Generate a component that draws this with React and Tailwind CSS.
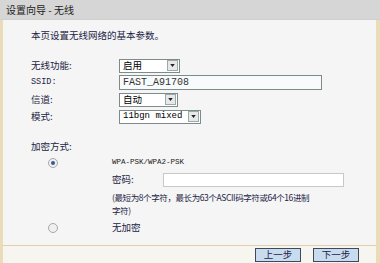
// 设置向导 — 无线 页面
const CN = { fontFamily: '"Noto Sans CJK SC", "Liberation Sans", sans-serif' };
const MONO = { fontFamily: '"Liberation Mono", "DejaVu Sans Mono", monospace' };

function Select({ value, width, mono }) {
  return (
    <div className={`flex items-center h-[14px] border border-[#7f8a8a] bg-white ${width}`}>
      <span
        className={`flex-1 pl-[3px] leading-none whitespace-nowrap text-black ${mono ? 'text-[9px]' : 'text-[9.5px]'}`}
        style={mono ? MONO : CN}
      >
        {value}
      </span>
      <span className="w-[11px] h-[11px] mr-[1px] border border-[#9aa] bg-[#e8e8e8] flex items-center justify-center">
        <svg width="5" height="3" viewBox="0 0 6 4"><path d="M0 0h6L3 4z" fill="#222" /></svg>
      </span>
    </div>
  );
}

function Radio({ checked }) {
  return (
    <span className="w-[10px] h-[10px] rounded-full border border-[#a8a8a8] bg-[#efefef] flex items-center justify-center">
      {checked && <span className="w-[4px] h-[4px] rounded-full bg-[#3a5a90]" />}
    </span>
  );
}

function Row({ label, children, mono }) {
  return (
    <div className="flex items-center h-[17px]">
      <span
        className={`w-[88px] leading-none text-[#1c1c44] ${mono ? 'text-[8.5px]' : 'text-[9.5px]'}`}
        style={mono ? MONO : CN}
      >
        {label}
      </span>
      {children}
    </div>
  );
}

export default function App() {
  return (
    <div className="w-[380px] h-[263px] bg-[#f4f4f4] flex flex-col overflow-hidden text-[#1c1c44]" style={CN}>
      <div className="h-[20px] shrink-0 bg-[#d6d6d6] border-b border-[#cfcfcf] flex items-center pl-[6px] text-[10px] leading-none text-[#222]">
        设置向导 - 无线
      </div>
      <div className="flex-1 min-h-0 flex flex-col border-l-[3px] border-r-[4px] border-[#eadcb8] bg-[#f5f5f5]">
        <div className="flex-1 min-h-0 pl-[28px]">
          <div className="mt-[9px] h-[12px] text-[9.5px] leading-[12px] whitespace-nowrap">本页设置无线网络的基本参数。</div>
          <div className="mt-[16px]">
            <Row label="无线功能:"><Select value="启用" width="w-[61px]" /></Row>
            <Row label="SSID:" mono>
              <div
                className="h-[15px] w-[203px] border border-[#7f8a8a] bg-[#f7fbfb] flex items-center pl-[3px] text-[10px] leading-none text-[#333]"
                style={MONO}
              >
                FAST_A91708
              </div>
            </Row>
            <Row label="信道:"><Select value="自动" width="w-[59px]" /></Row>
            <Row label="模式:"><Select value="11bgn mixed" width="w-[82px]" mono /></Row>
          </div>
          <div className="mt-[15px] h-[12px] text-[9.5px] leading-[12px]">加密方式:</div>
          <div className="flex items-center h-[16px] mt-[3px]">
            <span className="w-[17px]" />
            <Radio checked />
            <span className="w-[54px]" />
            <span className="text-[7.5px] leading-none text-[#222]" style={MONO}>WPA-PSK/WPA2-PSK</span>
          </div>
          <div className="flex items-center h-[17px] pl-[81px]">
            <span className="w-[51px] text-[9.5px] leading-none">密码:</span>
            <div className="h-[14px] w-[181px] border border-[#c8c8c8] bg-white" />
          </div>
          <div className="pl-[81px] mt-[3px] text-[8.5px] tracking-[-0.4px] leading-[13px] whitespace-nowrap text-[#1c1c44]">
            (最短为8个字符，最长为63个ASCII码字符或64个16进制
            <br />
            字符)
          </div>
          <div className="flex items-center h-[16px] mt-[3px]">
            <span className="w-[17px]" />
            <Radio />
            <span className="w-[54px]" />
            <span className="text-[9.5px] leading-none">无加密</span>
          </div>
        </div>
        <div className="h-[18px] shrink-0 border-t border-[#e0cfa8] flex items-center justify-end gap-[12px] pr-[17px] bg-[#f7f5f0]">
          <button className="w-[46px] h-[14px] border border-[#3c4a5c] bg-[#c9dcef] text-[9.5px] leading-none text-[#1c1c44]">上一步</button>
          <button className="w-[46px] h-[14px] border border-[#3c4a5c] bg-[#c9dcef] text-[9.5px] leading-none text-[#1c1c44]">下一步</button>
        </div>
      </div>
    </div>
  );
}
